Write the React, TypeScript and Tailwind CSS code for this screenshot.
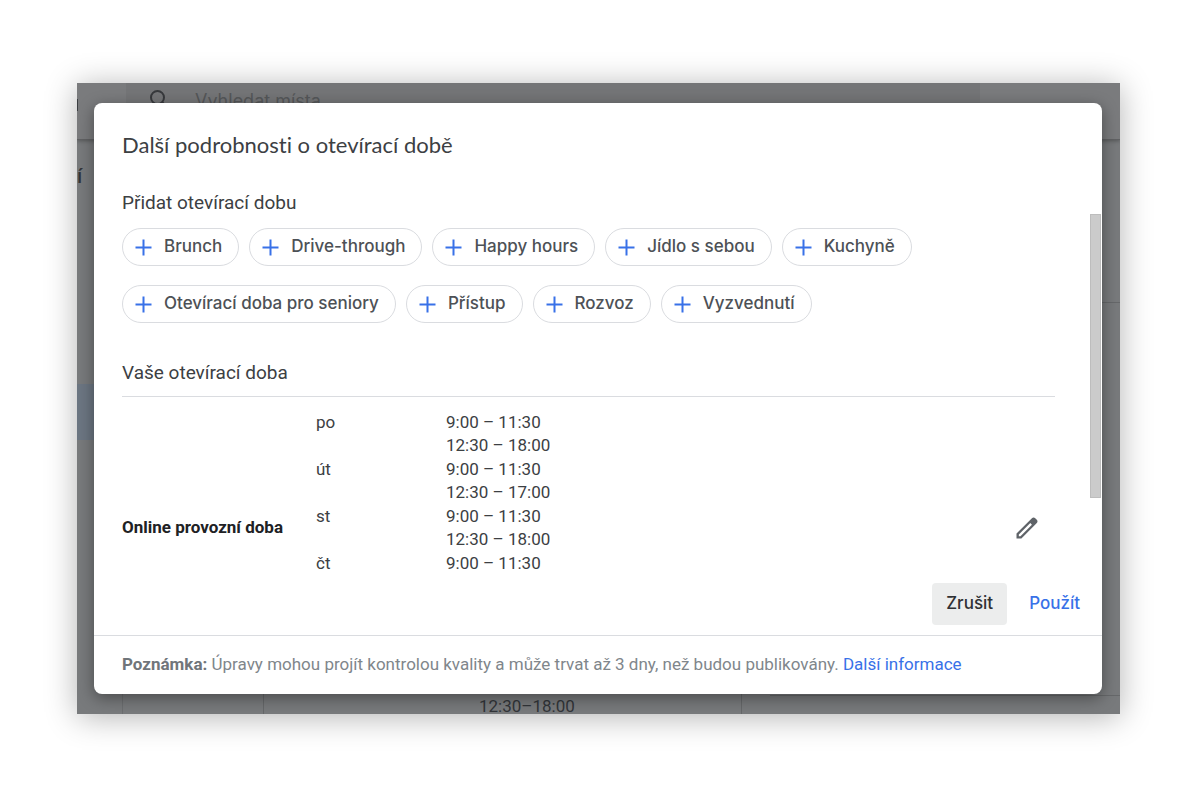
import { useState } from "react";

const HOUR_TYPES = [
  "Brunch",
  "Drive-through",
  "Happy hours",
  "Jídlo s sebou",
  "Kuchyně",
  "Otevírací doba pro seniory",
  "Přístup",
  "Rozvoz",
  "Vyzvednutí",
];

const OPENING_HOURS = [
  { day: "po", morning: "9:00 – 11:30", afternoon: "12:30 – 18:00" },
  { day: "út", morning: "9:00 – 11:30", afternoon: "12:30 – 17:00" },
  { day: "st", morning: "9:00 – 11:30", afternoon: "12:30 – 18:00" },
  { day: "čt", morning: "9:00 – 11:30", afternoon: "12:30 – 17:00" },
  { day: "pá", morning: "9:00 – 11:30", afternoon: "12:30 – 18:00" },
];

function PlusIcon() {
  return (
    <svg viewBox="0 0 17 17" className="size-[17px] shrink-0 text-[#3871e8]" aria-hidden="true">
      <path d="M8.5 0.5v16M0.5 8.5h16" stroke="currentColor" strokeWidth="2" fill="none" />
    </svg>
  );
}

function PencilIcon() {
  return (
    <svg viewBox="0 0 24 24" className="size-7 text-[#5f6368]" fill="currentColor" aria-hidden="true">
      <path d="M20.41 4.94l-1.35-1.35c-.78-.78-2.05-.78-2.83 0L3 16.82V21h4.18L20.41 7.77c.79-.78.79-2.05 0-2.83zm-14 14.12L5 19v-1.36l9.82-9.82 1.41 1.41-9.82 9.83z" />
    </svg>
  );
}

function Backdrop() {
  return (
    <div
      className="absolute inset-0 flex flex-col overflow-hidden bg-[#787a7c] text-[#323539]"
      aria-hidden="true"
    >
      <div className="flex h-[57px] shrink-0 border-b border-[#606163] bg-[#7a7b7d] shadow-[0_1px_4px_rgba(0,0,0,0.3)]">
        <div className="flex w-[49px] shrink-0 items-start pt-4">
          <span className="h-3 w-px bg-[#3b3e42]" />
        </div>
        <div className="flex w-[854px] items-start gap-[27px] bg-[#747577] pl-6 pt-1.5">
          <svg viewBox="0 0 18 18" className="mt-px size-[18px]" fill="none" stroke="#37393c" strokeWidth="2">
            <circle cx="7.5" cy="7.5" r="6.5" />
            <path d="M12 12l5 5" />
          </svg>
          <span className="font-['Inter',sans-serif] text-lg leading-6 text-[#555759]">
            Vyhledat místa
          </span>
        </div>
      </div>
      <div className="flex flex-1">
        <div className="w-[46px] border-r border-[#6c6e70] pt-5">
          <div className="text-xl leading-8 font-medium">í</div>
          <div className="mt-48 h-14 w-5 bg-[#6c7682]" />
        </div>
        <div className="w-[141px] border-r border-[#66686a]" />
        <div className="flex w-[478px] items-end border-r border-[#66686a] pl-[215px]">
          <span className="text-[17px] leading-[15px]">12:30–18:00</span>
        </div>
        <div className="flex flex-1 flex-col pl-7">
          <div className="h-[163px] border-b border-[#66686a]" />
          <div className="flex-1 border-b border-[#66686a]" />
          <div className="h-[18px]" />
        </div>
      </div>
    </div>
  );
}

function HoursTable() {
  return (
    <table className="mt-[13px] w-full text-left text-[17px] text-[#3c4043]">
      <tbody>
        {OPENING_HOURS.map((row, index) => (
          <tr key={row.day} className="align-top">
            {index === 0 && (
              <th
                rowSpan={OPENING_HOURS.length}
                scope="rowgroup"
                className="w-[194px] align-middle font-bold text-[#202124]"
              >
                Online provozní doba
              </th>
            )}
            <th scope="row" className="w-[130px] font-normal leading-6">
              {row.day}
            </th>
            <td>
              <div className="leading-6">{row.morning}</div>
              <div className="leading-[23px]">{row.afternoon}</div>
            </td>
            {index === 0 && (
              <td rowSpan={OPENING_HOURS.length} className="w-[52px] align-middle">
                <button
                  type="button"
                  aria-label="Upravit"
                  className="flex size-12 items-center justify-center rounded-full"
                >
                  <PencilIcon />
                </button>
              </td>
            )}
          </tr>
        ))}
      </tbody>
    </table>
  );
}

export default function App() {
  const [added, setAdded] = useState<string[]>([]);

  return (
    <main className="min-h-screen bg-white pt-[83px] pr-20 pb-20 pl-[77px] font-['Roboto',sans-serif]">
      <div className="relative pt-5 pr-[18px] pb-5 pl-[17px] shadow-[0_3px_30px_rgba(0,0,0,0.3)]">
        <Backdrop />
        <section
          role="dialog"
          aria-labelledby="dialog-title"
          className="relative rounded-lg bg-white shadow-[0_4px_16px_rgba(0,0,0,0.4)]"
        >
          <h1
            id="dialog-title"
            className="px-7 pt-7 font-['Lato',sans-serif] text-[22px] leading-7 text-[#3c4043] [font-variant-ligatures:none]"
          >
            Další podrobnosti o otevírací době
          </h1>

          <div className="mt-[30px] h-[380px] overflow-hidden pr-[47px] pl-7">
            <h2 className="text-[19px] leading-7 text-[#3c4043]">Přidat otevírací dobu</h2>
            <div className="mt-[11px] flex flex-wrap gap-x-2.5 gap-y-[19px]">
              {HOUR_TYPES.map((type) => (
                <button
                  key={type}
                  type="button"
                  aria-pressed={added.includes(type)}
                  onClick={() => setAdded([...added, type])}
                  className="flex h-[38px] items-center gap-3 rounded-full border border-[#dadce0] pr-4 pl-3 font-['Inter',sans-serif] text-[17px] font-medium text-[#4d5156]"
                >
                  <PlusIcon />
                  {type}
                </button>
              ))}
            </div>
            <h2 className="mt-9 border-b border-[#dadce0] pb-[9px] text-[19px] leading-7 text-[#3c4043]">
              Vaše otevírací doba
            </h2>
            <HoursTable />
          </div>
          <div className="absolute top-[111px] right-[1px] h-[284px] w-[11px] border border-[#bdbdbd] bg-[#cbcbcb]" />

          <div className="flex justify-end gap-2 px-2 pt-3.5 pb-2.5 font-['Inter',sans-serif] text-[17px] font-medium">
            <button type="button" className="h-[42px] rounded bg-[#eceded] px-3.5 text-[#303134]">
              Zrušit
            </button>
            <button type="button" className="h-[42px] rounded px-3.5 text-[#3871e8]">
              Použít
            </button>
          </div>

          <p className="border-t border-[#dadce0] px-7 pt-4 pb-[18px] text-[17px] leading-6 text-[#80868b]">
            <strong className="font-bold text-[#70757a]">Poznámka:</strong> Úpravy mohou projít kontrolou
            kvality a může trvat až 3 dny, než budou publikovány.{" "}
            <a href="#dalsi-informace" className="text-[#3871e8]">
              Další informace
            </a>
          </p>
        </section>
      </div>
    </main>
  );
}
